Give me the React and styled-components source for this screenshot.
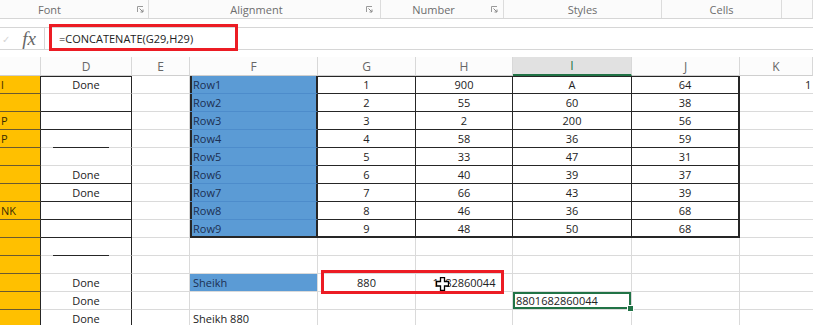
import styled, { createGlobalStyle } from 'styled-components';

const DARK = '#262626';
const GRID = '#dadada';
const BLUE = '#5b9bd5';
const YELLOW = '#ffc000';
const GREEN = '#217346';

const GlobalStyle = createGlobalStyle`
body {
  margin: 0;
  background: #fff;
  font-family: "Open Sans", "Noto Sans", sans-serif;
  overflow: hidden;
}
`;

const Page = styled.div`
width: 813px;
height: 325px;
overflow: hidden;
background: #fff;
`;

const Ribbon = styled.div`
display: flex;
height: 19px;
box-sizing: border-box;
border-bottom: 1px solid #d6d6d6;
background: #fbfbfb;
`;

const Group = styled.div`
display: flex;
align-items: center;
width: ${p => p.$w}px;
box-sizing: border-box;
border-right: 1px solid #dcdcdc;
`;

const GroupLabel = styled.span`
flex: 1;
text-align: center;
padding-right: ${p => p.$pr || 0}px;
font-size: 11px;
color: #6d6d6d;
`;

const Launcher = styled.svg`
width: 7px;
height: 7px;
margin-right: ${p => p.$mr}px;
`;

const FormulaArea = styled.div`
position: relative;
height: 38px;
padding-top: 8px;
box-sizing: border-box;
`;

const FormulaBar = styled.div`
display: flex;
align-items: center;
height: 23px;
box-sizing: border-box;
border-top: 1px solid #d6d6d6;
border-bottom: 1px solid #d6d6d6;
`;

const EnterMark = styled.span`
width: 12px;
padding-left: 2px;
font-size: 10px;
color: #d4d4d4;
`;

const FxBox = styled.div`
display: flex;
align-items: center;
justify-content: center;
width: 31px;
height: 100%;
box-sizing: border-box;
border-right: 1px solid #d6d6d6;
font-family: "Liberation Serif", serif;
font-style: italic;
font-size: 19px;
color: #666;
`;

const FormulaText = styled.span`
padding-left: 14px;
font-size: 11px;
color: #222;
`;

const RedBox = styled.div`
position: absolute;
left: ${p => p.$x}px;
top: ${p => p.$y}px;
width: ${p => p.$w}px;
height: ${p => p.$h}px;
box-sizing: border-box;
border: 3px solid #ec1c24;
pointer-events: none;
`;

const Sheet = styled.div`
position: relative;
display: grid;
grid-template-columns: 41px 91px 58px 128px 98px 97px 119px 108px 73px;
`;

const HeadCell = styled.div`
height: 19px;
box-sizing: border-box;
display: flex;
align-items: center;
justify-content: center;
font-size: 12px;
color: ${p => (p.$on ? GREEN : '#666')};
background: ${p => (p.$on ? '#e1e1e1' : '#fcfcfc')};
border-right: 1px solid #d8d8d8;
border-bottom: ${p => (p.$on ? `2px solid ${GREEN}` : '1px solid #cfcfcf')};
`;

const justify = { center: 'center', right: 'flex-end', left: 'flex-start' };

const shadows = p => {
  const s = [];
  if (p.$t) s.push(`inset 0 1px 0 ${DARK}`);
  if (p.$l) s.push(`inset ${p.$l}px 0 0 ${DARK}`);
  if (p.$sel) s.push(`inset 0 0 0 2px ${GREEN}`);
  return s.length ? s.join(', ') : 'none';
};

const Cell = styled.div`
position: relative;
height: 18px;
box-sizing: border-box;
display: flex;
align-items: center;
justify-content: ${p => justify[p.$align || 'left']};
padding: 0 ${p => p.$pad ?? 2}px;
background: ${p => p.$fill || '#fff'};
color: ${p => p.$color || '#222'};
border-right: ${p => p.$rw || 1}px solid ${p => p.$rc || GRID};
border-bottom: ${p => p.$bw || 1}px solid ${p => p.$bc || GRID};
box-shadow: ${shadows};
font-size: 11px;
white-space: nowrap;

${p => p.$partial && `
  &::after {
    content: '';
    position: absolute;
    left: 12px;
    right: 22px;
    bottom: -1px;
    height: 1px;
    background: ${DARK};
  }
`}
`;

const FillHandle = styled.span`
position: absolute;
right: -3px;
bottom: -3px;
width: 5px;
height: 5px;
background: ${GREEN};
border: 1px solid #fff;
z-index: 2;
`;

const Cursor = styled.svg`
position: absolute;
left: 436px;
top: 220px;
width: 13px;
height: 14px;
z-index: 3;
`;

const groups = [
  { label: 'Font', w: 149, pr: 38, mr: 4 },
  { label: 'Alignment', w: 232, pr: 2, mr: 7 },
  { label: 'Number', w: 123, pr: 5, mr: 5 },
  { label: 'Styles', w: 158 },
  { label: 'Cells', w: 120 },
  { label: '', w: 31 },
];

const heads = ['', 'D', 'E', 'F', 'G', 'H', 'I', 'J', 'K'];

const rows = [
  { c: 'l', d: 'Done', f: 'Row1', n: ['1', '900', 'A', '64'], k: '1' },
  { f: 'Row2', n: ['2', '55', '60', '38'] },
  { c: 'P', f: 'Row3', n: ['3', '2', '200', '56'] },
  { c: 'P', f: 'Row4', n: ['4', '58', '36', '59'] },
  { f: 'Row5', n: ['5', '33', '47', '31'] },
  { d: 'Done', f: 'Row6', n: ['6', '40', '39', '37'] },
  { d: 'Done', f: 'Row7', n: ['7', '66', '43', '39'] },
  { c: 'NK', f: 'Row8', n: ['8', '46', '36', '68'] },
  { f: 'Row9', n: ['9', '48', '50', '68'] },
  {},
  {},
  { d: 'Done', name: 'Sheikh', g: '880', h: '1682860044' },
  { d: 'Done', result: '8801682860044' },
  { d: 'Done', text: 'Sheikh 880' },
];

const darkD = [1, 2, 5, 6, 7, 8];
const partialD = [3, 9];

function LauncherIcon({ mr }) {
  return (
    <Launcher $mr={mr} viewBox="0 0 7 7">
      <path d="M0.5 6V0.5H6" fill="none" stroke="#9a9a9a" strokeWidth="1" />
      <path d="M2.5 2.5L6 6M6 3.5V6H3.5" fill="none" stroke="#8a8a8a" strokeWidth="1" />
    </Launcher>
  );
}

function Row({ r, i }) {
  const inTable = i < 9;
  const last = i === 8;
  return (
    <>
      <Cell $fill={YELLOW} $color="#3b2c00" $pad={1} $rc={DARK} $bc="#6a5a30">
        {r.c}
      </Cell>
      <Cell
        $align="center"
        $rc={DARK}
        $t={i === 0}
        $bc={darkD.includes(i) ? DARK : GRID}
        $partial={partialD.includes(i)}
      >
        {r.d}
      </Cell>
      <Cell />
      {inTable ? (
        <Cell $fill={BLUE} $color="#1b2f52" $l={2} $rw={2} $rc={DARK} $bc={last ? DARK : '#4d8ccb'} $bw={last ? 2 : 1} $pad={3}>
          {r.f}
        </Cell>
      ) : r.name ? (
        <Cell $fill={BLUE} $color="#1b2f52" $pad={3}>{r.name}</Cell>
      ) : (
        <Cell $pad={3}>{r.text}</Cell>
      )}
      {inTable
        ? r.n.map((v, j) => (
            <Cell
              key={j}
              $align="center"
              $t={i === 0}
              $rc={DARK}
              $rw={j === 3 ? 2 : 1}
              $bc={DARK}
              $bw={last ? 2 : 1}
            >
              {v}
            </Cell>
          ))
        : [
            <Cell key="g" $align="center">{r.g}</Cell>,
            <Cell key="h" $align="center">{r.h}</Cell>,
            r.result ? (
              <Cell key="i" $sel $pad={3}>
                {r.result}
                <FillHandle />
              </Cell>
            ) : (
              <Cell key="i" />
            ),
            <Cell key="j" />,
          ]}
      <Cell $pad={65}>{r.k}</Cell>
    </>
  );
}

export default function App() {
  return (
    <Page>
      <GlobalStyle />
      <Ribbon>
        {groups.map(g => (
          <Group key={g.label || 'x'} $w={g.w}>
            <GroupLabel $pr={g.pr}>{g.label}</GroupLabel>
            {g.mr !== undefined && <LauncherIcon mr={g.mr} />}
          </Group>
        ))}
      </Ribbon>

      <FormulaArea>
        <FormulaBar>
          <EnterMark>✓</EnterMark>
          <FxBox>fx</FxBox>
          <FormulaText>=CONCATENATE(G29,H29)</FormulaText>
        </FormulaBar>
        <RedBox $x={49} $y={5} $w={189} $h={27} />
      </FormulaArea>

      <Sheet>
        {heads.map((h, j) => (
          <HeadCell key={j} $on={h === 'I'}>{h}</HeadCell>
        ))}
        {rows.map((r, i) => (
          <Row key={i} r={r} i={i} />
        ))}
        <RedBox $x={321} $y={213} $w={183} $h={24} />
        <Cursor viewBox="0 0 13 14">
          <path
            d="M4.5 0.5H8.5V4.5H12.5V9H8.5V13.5H4.5V9H0.5V4.5H4.5Z"
            fill="#fff"
            stroke="#000"
            strokeWidth="1.3"
          />
        </Cursor>
      </Sheet>
    </Page>
  );
}
